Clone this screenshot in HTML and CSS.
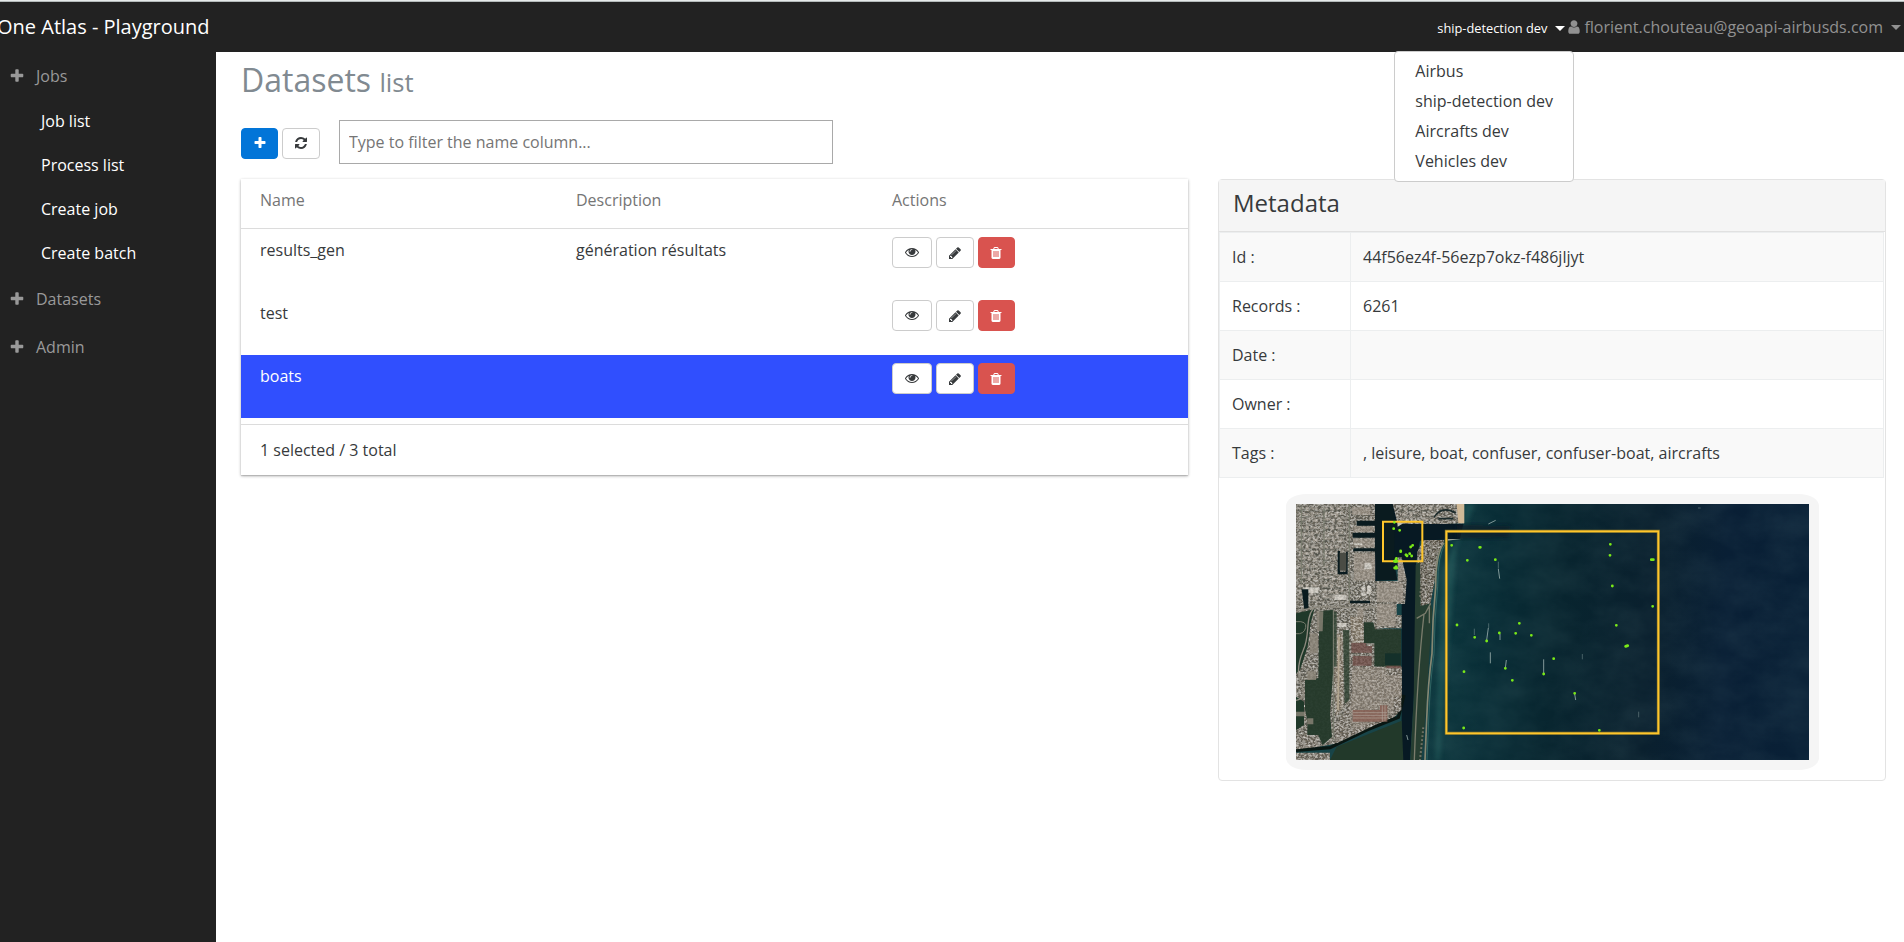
FILE: index.html
```html
<!DOCTYPE html>
<html lang="en">
<head>
<meta charset="utf-8">
<title>One Atlas - Playground</title>
<link rel="stylesheet" href="styles.css">
</head>
<body>
<svg class="symbols" aria-hidden="true">
  <symbol id="plus" viewBox="0 0 1792 1792"><path d="M1600 736v192q0 40-28 68t-68 28h-416v416q0 40-28 68t-68 28h-192q-40 0-68-28t-28-68v-416h-416q-40 0-68-28t-28-68v-192q0-40 28-68t68-28h416v-416q0-40 28-68t68-28h192q40 0 68 28t28 68v416h416q40 0 68 28t28 68z"/></symbol>
  <symbol id="refresh" viewBox="0 0 1792 1792"><path d="M1639 1056q0 5-1 7-64 268-268 434.5t-478 166.500q-146 0-282.500-55t-243.500-157l-129 129q-19 19-45 19t-45-19-19-45v-448q0-26 19-45t45-19h448q26 0 45 19t19 45-19 45l-137 137q71 66 161 102t187 36q134 0 250-65t186-179q11-17 53-117 8-23 30-23h192q13 0 22.500 9.500t9.500 22.500zm25-800v448q0 26-19 45t-45 19h-448q-26 0-45-19t-19-45 19-45l138-138q-148-137-349-137-134 0-250 65t-186 179q-11 17-53 117-8 23-30 23h-199q-13 0-22.500-9.500t-9.500-22.500v-7q65-268 270-434.500t480-166.500q146 0 284 55.500t245 156.500l130-129q19-19 45-19t45 19 19 45z"/></symbol>
  <symbol id="eye" viewBox="0 0 1792 1792"><path d="M1664 960q-152-236-381-353 61 104 61 225 0 185-131.500 316.500t-316.500 131.500-316.500-131.500-131.500-316.500q0-121 61-225-229 117-381 353 133 205 333.500 326.500t434.500 121.500 434.500-121.500 333.500-326.500zm-720-384q0-20-14-34t-34-14q-125 0-214.500 89.500t-89.500 214.500q0 20 14 34t34 14 34-14 14-34q0-86 61-147t147-61q20 0 34-14t14-34zm848 384q0 34-20 69-140 230-376.500 368.500t-499.500 138.500-499.500-139-376.500-368q-20-35-20-69t20-69q140-229 376.500-368t499.500-139 499.500 139 376.500 368q20 35 20 69z"/></symbol>
  <symbol id="pencil" viewBox="0 0 1792 1792"><path d="M491 1536l91-91-235-235-91 91v107h128v128h107zm523-928q0-22-22-22-10 0-17 7l-542 542q-7 7-7 17 0 22 22 22 10 0 17-7l542-542q7-7 7-17zm-54-192l416 416-832 832h-416v-416zm683 96q0 53-37 90l-166 166-416-416 166-165q36-38 90-38 53 0 91 38l235 234q37 39 37 91z"/></symbol>
  <symbol id="trash" viewBox="0 0 1792 1792"><path d="M704 1376v-704q0-14-9-23t-23-9h-64q-14 0-23 9t-9 23v704q0 14 9 23t23 9h64q14 0 23-9t9-23zm256 0v-704q0-14-9-23t-23-9h-64q-14 0-23 9t-9 23v704q0 14 9 23t23 9h64q14 0 23-9t9-23zm256 0v-704q0-14-9-23t-23-9h-64q-14 0-23 9t-9 23v704q0 14 9 23t23 9h64q14 0 23-9t9-23zm-544-992h448l-48-117q-7-9-17-11h-317q-10 2-17 11zm928 32v64q0 14-9 23t-23 9h-96v948q0 83-47 143.500t-113 60.500h-832q-66 0-113-58.500t-47-141.500v-952h-96q-14 0-23-9t-9-23v-64q0-14 9-23t23-9h309l70-167q15-37 54-63t79-26h320q40 0 79 26t54 63l70 167h309q14 0 23 9t9 23z"/></symbol>
  <symbol id="user" viewBox="0 0 1792 1792"><path d="M1536 1399q0 109-62.500 187t-150.500 78h-854q-88 0-150.500-78t-62.500-187q0-85 8.500-160.500t31.500-152 58.500-131 94-89 134.500-34.500q131 128 313 128t313-128q76 0 134.500 34.500t94 89 58.500 131 31.500 152 8.500 160.500zm-256-887q0 159-112.500 271.500t-271.500 112.500-271.500-112.500-112.500-271.500 112.500-271.500 271.500-112.500 271.500 112.500 112.500 271.500z"/></symbol>
</svg>

<header class="topbar">
  <a class="brand">One Atlas - Playground</a>
  <div class="account">
    <div class="project">
      <span class="project-name">ship-detection dev</span><i class="caret"></i>
      <ul class="menu">
        <li>Airbus</li>
        <li>ship-detection dev</li>
        <li>Aircrafts dev</li>
        <li>Vehicles dev</li>
      </ul>
    </div>
    <div class="user"><svg class="icon user-icon"><use href="#user"/></svg><span class="email">florient.chouteau@geoapi-airbusds.com</span><i class="caret"></i></div>
  </div>
</header>

<div class="layout">
  <nav class="sidebar">
    <div class="group first"><svg class="icon"><use href="#plus"/></svg>Jobs</div>
    <a class="link">Job list</a>
    <a class="link">Process list</a>
    <a class="link">Create job</a>
    <a class="link">Create batch</a>
    <div class="group"><svg class="icon"><use href="#plus"/></svg>Datasets</div>
    <div class="group"><svg class="icon"><use href="#plus"/></svg>Admin</div>
  </nav>

  <main class="content">
    <h1 class="title">Datasets <small>list</small></h1>
    <div class="toolbar">
      <button class="btn primary"><svg class="icon"><use href="#plus"/></svg></button>
      <button class="btn"><svg class="icon"><use href="#refresh"/></svg></button>
      <input class="filter" type="text" placeholder="Type to filter the name column...">
    </div>
    <div class="columns">
      <section class="grid">
        <div class="row head"><span>Name</span><span>Description</span><span>Actions</span></div>
        <div class="row"><span>results_gen</span><span>génération résultats</span>
          <div class="actions"><button class="btn view"><svg class="icon"><use href="#eye"/></svg></button><button class="btn"><svg class="icon"><use href="#pencil"/></svg></button><button class="btn danger"><svg class="icon"><use href="#trash"/></svg></button></div></div>
        <div class="row"><span>test</span><span></span>
          <div class="actions"><button class="btn view"><svg class="icon"><use href="#eye"/></svg></button><button class="btn"><svg class="icon"><use href="#pencil"/></svg></button><button class="btn danger"><svg class="icon"><use href="#trash"/></svg></button></div></div>
        <div class="row selected"><span>boats</span><span></span>
          <div class="actions"><button class="btn view"><svg class="icon"><use href="#eye"/></svg></button><button class="btn"><svg class="icon"><use href="#pencil"/></svg></button><button class="btn danger"><svg class="icon"><use href="#trash"/></svg></button></div></div>
        <div class="grid-foot">1 selected / 3 total</div>
      </section>

      <section class="card">
        <h2 class="card-head">Metadata</h2>
        <dl class="meta">
          <dt>Id :</dt><dd>44f56ez4f-56ezp7okz-f486jljyt</dd>
          <dt>Records :</dt><dd>6261</dd>
          <dt>Date :</dt><dd></dd>
          <dt>Owner :</dt><dd></dd>
          <dt>Tags :</dt><dd>, leisure, boat, confuser, confuser-boat, aircrafts</dd>
        </dl>
        <div class="thumb">
          <svg class="map" viewBox="78 72 1539 768" preserveAspectRatio="none">
            <defs>
              <linearGradient id="sea" x1="460" x2="1617" y1="0" y2="60" gradientUnits="userSpaceOnUse">
                <stop offset="0" stop-color="#184448"/><stop offset=".05" stop-color="#0c363d"/><stop offset=".18" stop-color="#082d36"/><stop offset=".36" stop-color="#08252f"/><stop offset=".6" stop-color="#0a202e"/><stop offset=".8" stop-color="#091f35"/><stop offset="1" stop-color="#092036"/>
              </linearGradient>
              <filter id="urban" x="0" y="0" width="100%" height="100%">
                <feTurbulence type="fractalNoise" baseFrequency=".14 .17" numOctaves="3" seed="8"/>
                <feColorMatrix values="2 0 0 0 -.74  2 0 0 0 -.76  2 0 0 0 -.79  0 0 0 0 1"/>
                <feComposite in2="SourceGraphic" operator="in" result="n"/>
                <feComposite in="n" in2="SourceGraphic" operator="arithmetic" k2=".5" k3=".68"/>
              </filter>
              <filter id="grain" x="0" y="0" width="100%" height="100%">
                <feTurbulence type="fractalNoise" baseFrequency=".008 .012" numOctaves="5" seed="3"/>
                <feColorMatrix values="0 0 0 0 .25  0 0 0 0 .42  0 0 0 0 .42  .5 0 0 0 -.12"/>
              </filter>
              <filter id="soft"><feGaussianBlur stdDeviation="6"/></filter>
              <filter id="haze"><feGaussianBlur stdDeviation="1.200"/></filter>
              <pattern id="blocks" width="74" height="58" patternUnits="userSpaceOnUse" x="80" y="74">
                <path fill="#c7beb3" d="M5 7h15v8H5zM27 6h9v12h-9zM43 8h20v6H43zM8 24h8v11H8zM21 27h15v6H21zM42 23h9v14h-9zM57 22h8v8h-8zM6 42h20v6H6zM34 42h8v11h-8zM49 44h14v8H49z"/>
                <path fill="#3c4239" d="M21 8h4v12h-4zM38 6h3v15h-3zM6 16h13v4H6zM43 16h17v3H43zM24 35h13v4H24zM53 31h14v4H53zM7 49h18v4H7zM43 47h4v7h-4z"/>
                <path fill="none" stroke="#8f8b82" stroke-width="3" d="M0 1.500h74M0 39h74M1.500 0v58"/>
              </pattern>
            </defs>
            <rect x="78" y="72" width="1539" height="768" fill="url(#sea)"/>
            <path d="M500 176Q525 188 505 260Q490 480 470 840H496Q500 520 520 270L560 180L582 132V72H615L560 200Q535 500 510 840H470z" fill="#2a6a66" opacity=".4" filter="url(#soft)"/>
            <rect x="450" y="72" width="1167" height="768" filter="url(#grain)" opacity=".3"/>
            <path fill="#071923" d="M315 72H370L385 132H580L570 176L450 182L438 250L440 370L432 640L420 840H395V250L315 305z"/>
            <path fill="#071d28" opacity=".7" filter="url(#soft)" d="M560 132L720 138V172L560 178z"/>
            <g filter="url(#urban)">
              <path fill="#6f6e65" d="M78 72H315V303H330L383 303V232H395L410 300L405 372H380V405H395V445H313L393 450V560H396V690L372 712L205 790L78 812z"/>
              <path fill="#6f6e65" d="M368 72H582V130L520 132H383z"/>
              <path fill="#625f55" d="M460 180H523L503 225L498 280L478 390L440 378L442 215z"/>
            </g>
            <path fill="url(#blocks)" opacity=".5" d="M78 74H232V372H78zM390 76H500V124H390z"/>
            <g opacity=".6">
              <path fill="#a49a8e" d="M246 80h55v24h-55zM250 139h58v17h-58zM250 178h62v22h-62zM252 220h64v82h-64zM320 308h78v58h-78zM320 372h57v66h-57zM262 385h18v28h-18zM384 238l12 2 9 50-8 12-13 0z"/>
              <path fill="#f0ede6" d="M291 318h13v24h-13zM275 319h11v12h-11zM275 337h11v12h-11zM202 429h28v12h-28zM98 322h47v18h-47zM194 345h35v15h-35zM252 190h25v5h-25zM283 250h22v18h-22z"/>
            </g>
            <path fill="#0a1b1f" d="M260 122H316V137H260zM248 158H316V173H248zM250 205H316V214H250zM315 72H367L375 120L372 245L382 300L321 302L315 210zM95 328H115V388H103zM203 213H210V275H228V215H233V283H203zM240 362H300V370H240z"/>
            <path fill="#4a4c45" d="M209 218H229V272H209z"/>
            <path fill="#233829" opacity=".95" d="M282 427H310L315 448H393V560H313V490H282zM148 394L190 389V570L180 700L186 770L158 796L145 766H112V720L105 690V600L145 595z"/>
            <path fill="#14302a" d="M345 520H392V555H345z"/>
            <path fill="#1f3829" d="M78 400L133 388L122 430L113 500L90 570L78 580zM78 650L102 665V735L78 750z"/>
            <path fill="#8b8578" opacity=".8" d="M112 572h26v28h-26zM112 715h18v18h-18zM78 695h28v14H78zM140 394h20l-2 60h-18zM120 460h24v60h-24z"/>
            <path fill="#22392a" d="M180 840L200 800L395 722L400 840z"/>
            <path fill="none" stroke="#091612" stroke-width="10" d="M78 811L180 803L290 750L385 712L402 645"/>
            <g filter="url(#urban)"><path fill="#746f66" d="M78 765L145 766L145 800L78 808zM78 818H180V840H78zM246 560H394V690L368 710L200 790L190 750L240 670z"/><path fill="#8a8172" d="M200 460H218L220 680L198 710L192 600zM240 410H278L280 488L246 490z"/></g>
            <path fill="#a09589" opacity=".4" d="M246 562H350V585H392V650H370V700L248 755V730H240V680L246 660z"/>
            <path fill="#2d4030" opacity=".8" d="M219 450H238V660L224 672zM192 395H200V560H192z"/>
            <path fill="#704c47" opacity=".75" d="M244 489H288V498H306V518H244zM248 528H305V557H248zM349 557H392V565H349z"/>
            <path fill="#865f54" opacity=".85" d="M248 690H330V676H352V725H248z"/>
            <path fill="none" stroke="#afa398" stroke-width="2" d="M248 698H352M248 706H352M248 714H352M337 676V724M345 676V724"/>
            <path fill="none" stroke="#8f8b80" stroke-width="4" d="M78 394C130 385 140 375 200 382H318M130 385C104 420 122 460 100 510Q75 570 93 612Q112 655 78 661"/>
            <path fill="none" stroke="#b1a58f" stroke-width="5" d="M207 470L204 690"/>
            <path fill="none" stroke="#777b6d" stroke-width="3" d="M78 425Q112 422 107 443T78 461M238 74V365M190 390V780M94 76V312M162 80V260"/>
            <path fill="#273e31" d="M437 255L450 245L452 378L482 370L487 390L477 540L468 690L454 840H421L431 660L434 440z"/>
            <path fill="none" stroke="#7a7c6c" stroke-width="4" d="M440 415L466 400L482 370M462 402Q442 580 433 840M478 380V430"/>
            <path fill="none" stroke="#77766a" stroke-width="6" stroke-dasharray="5 7" d="M465 190L450 355M484 190L470 345M504 195L492 250M460 742L450 840"/>
            <path fill="none" stroke="#858873" stroke-width="5" d="M522 188Q497 220 497 320Q487 420 486 520Q474 610 470 720L465 840"/>
            <path fill="none" stroke="#3d7570" stroke-width="3" opacity=".7" d="M528 188Q503 220 503 320Q493 420 492 520Q480 610 476 720L471 840"/>
            <path fill="#d0b997" d="M560 72H583V130H565z"/><path fill="#c8c3b4" d="M382 128L400 130L383 140zM530 178L573 178L525 182z"/>
            <path fill="none" stroke="#1b2a2b" stroke-width="5" d="M492 112Q515 75 557 99M505 116H550"/>
            <g fill="none" stroke="#a9bcb9" stroke-width="3" opacity=".75" filter="url(#haze)"><path d="M655 132L677 121M685 267L689 296M655 444L650 480M661 517V550M709 540L706 565M821 538V580M690 462V480M410 765L414 780M914 642L917 660"/><path opacity=".5" d="M613 446V465M937 522V538M1106 695V712M1284 84H1292M685 245V266M656 430V444"/></g>
            <path fill="none" stroke="#8c7a2e" stroke-width="9" d="M529 154H1165V760H529z"/>
            <path fill="none" stroke="#ffc62b" stroke-width="6" d="M339 125H457V244H339z"/>
            <path fill="none" stroke="#ffc62b" stroke-width="5" d="M529 154H1165V760H529z"/>
            <path fill="none" stroke="#7aea18" stroke-width="8.500" stroke-linecap="round" d="M373 127v0M371 146v0M389 151v0M428 196v0M422 201v0M392 213v2M408 224l3 3M419 221v0M425 228v0M379 235L376 245M378 260L380 264M373 244h8M374 264h5M545 196v0M629 202h2M592 241v0M676 239v0M561 435v0M748 430v0M614 472v0M650 483v0M688 459v0M737 460v0M784 466v0M706 565v0M851 536v0M821 582v0M582 575v0M727 601v0M581 744v0M1021 193v0M1020 226v0M1144 239h6M1027 318v0M1148 379v0M1039 436v0M1067 499l6-2M914 640v0M988 751v0"/>
          </svg>
        </div>
      </section>
    </div>
  </main>
</div>
</body>
</html>
```
FILE: styles.css
```css
* { box-sizing: border-box; }
body {
  margin: 0;
  height: 942px;
  overflow: hidden;
  display: flex;
  flex-direction: column;
  font: 16px/24px "Open Sans", "Noto Sans", sans-serif;
  color: #373a3c;
  background: #fff;
}
.symbols { position: absolute; width: 0; height: 0; }
.icon { width: 14px; height: 14px; fill: currentColor; display: block; flex: none; }

.topbar {
  height: 52px;
  flex: none;
  display: flex;
  justify-content: space-between;
  align-items: center;
  background: #222;
  border-top: 1px solid #e6eaea;
  box-shadow: inset 0 1px 0 #b4baba;
  padding-top: 1px;
}
.brand { font-size: 20px; color: #fff; margin-left: -3px; padding-bottom: 1px; }
.account { display: flex; align-items: center; padding-right: 3px; }
.project { position: relative; display: flex; align-items: center; gap: 8px; color: #fff; font-size: 12.800px; padding-top: 2px; }
.caret { border: 5px solid transparent; border-top-color: currentColor; border-bottom: 0; }
.user { display: flex; align-items: center; color: #919191; font-size: 16px; margin-left: 1px; }
.user-icon { width: 16px; height: 16px; }
.email { margin: 0 8px 0 2px; }
.menu {
  position: absolute;
  z-index: 5;
  left: -43px;
  top: 37px;
  width: 180px;
  height: 131px;
  margin: 0;
  padding: 4px 0;
  list-style: none;
  background: #fff;
  border: 1px solid #ccc;
  border-radius: 4px;
  color: #373a3c;
  font-size: 16px;
  white-space: nowrap;
}
.menu li { line-height: 24px; padding: 3px 20px; }

.layout { display: flex; flex: 1; min-height: 0; }
.sidebar { width: 216px; flex: none; background: #222; color: #999; }
.group { display: flex; align-items: center; gap: 11px; height: 48px; padding-left: 9px; }
.group .icon { width: 16px; height: 16px; }
.group.first { height: 47px; padding-top: 1px; }
.link { display: flex; align-items: center; height: 44px; padding-left: 41px; color: #fff; }

.content { flex: 1; padding: 7px 18px 0 25px; }
.title { margin: 0; height: 44px; font-size: 32px; font-weight: 400; line-height: 42px; color: #818a91; }
.title small { font-size: 25.600px; }
.toolbar { display: flex; align-items: center; height: 76px; }
.btn {
  width: 38px;
  height: 31px;
  padding: 0 1px 0 0;
  display: flex;
  align-items: center;
  justify-content: center;
  background: #fff;
  color: #373a3c;
  border: 1px solid #ccc;
  border-radius: 4px;
}
.toolbar .btn { margin: 4px 4px 0 0; padding: 0; }
.primary { width: 37px; background: #0275d8; border-color: #0275d8; color: #fff; }
.danger { width: 37px; background: #d9534f; border-color: #d9534f; color: #fff; }
.view { width: 40px; }
.view .icon { margin-bottom: 1px; }
.filter {
  width: 494px;
  height: 44px;
  margin: 2px 0 0 15px;
  padding: 0 9px;
  border: 1px solid #a9a9a9;
  font: inherit;
}
.filter::placeholder { color: #757575; }

.columns { display: flex; justify-content: space-between; align-items: flex-start; }
.grid { width: 947px; height: 296px; box-shadow: 0 1px 3px rgba(0,0,0,.3), 0 1px 1px rgba(0,0,0,.12); }
.row { display: grid; grid-template-columns: 316px 316px 1fr; height: 63px; padding: 9px 19px; }
.head { height: 50px; color: #757575; border-bottom: 1px solid #dcdcdc; }
.selected { background: #304ffe; color: #fff; }
.actions { display: flex; gap: 4px; margin-top: -1px; }
.grid-foot { height: 51px; margin-top: 6px; border-top: 1px solid #dcdcdc; padding: 13px 19px; }

.card { width: 668px; height: 602px; border: 1px solid #e3e3e3; border-radius: 4px; }
.card-head { margin: 0; height: 52px; padding: 8px 14px; font-size: 24px; font-weight: 400; line-height: 30px; background: #f5f5f5; border-bottom: 1px solid #e1e1e1; }
.meta { display: grid; grid-template-columns: 131px 1fr; margin: 0 1px 0 0; border-left: 1px solid #eceeef; border-top: 1px solid #eceeef; }
.meta dt, .meta dd { height: 49px; margin: 0; padding: 12px; border: solid #eceeef; border-width: 0 1px 1px 0; }
.meta :nth-child(4n+1), .meta :nth-child(4n+2) { background: #f9f9f9; }
.thumb { width: 533px; height: 276px; margin: 16px auto 0; padding: 10px; background: #f5f5f5; border-radius: 20px / 12px; }
.map { display: block; width: 513px; height: 256px; }
```
